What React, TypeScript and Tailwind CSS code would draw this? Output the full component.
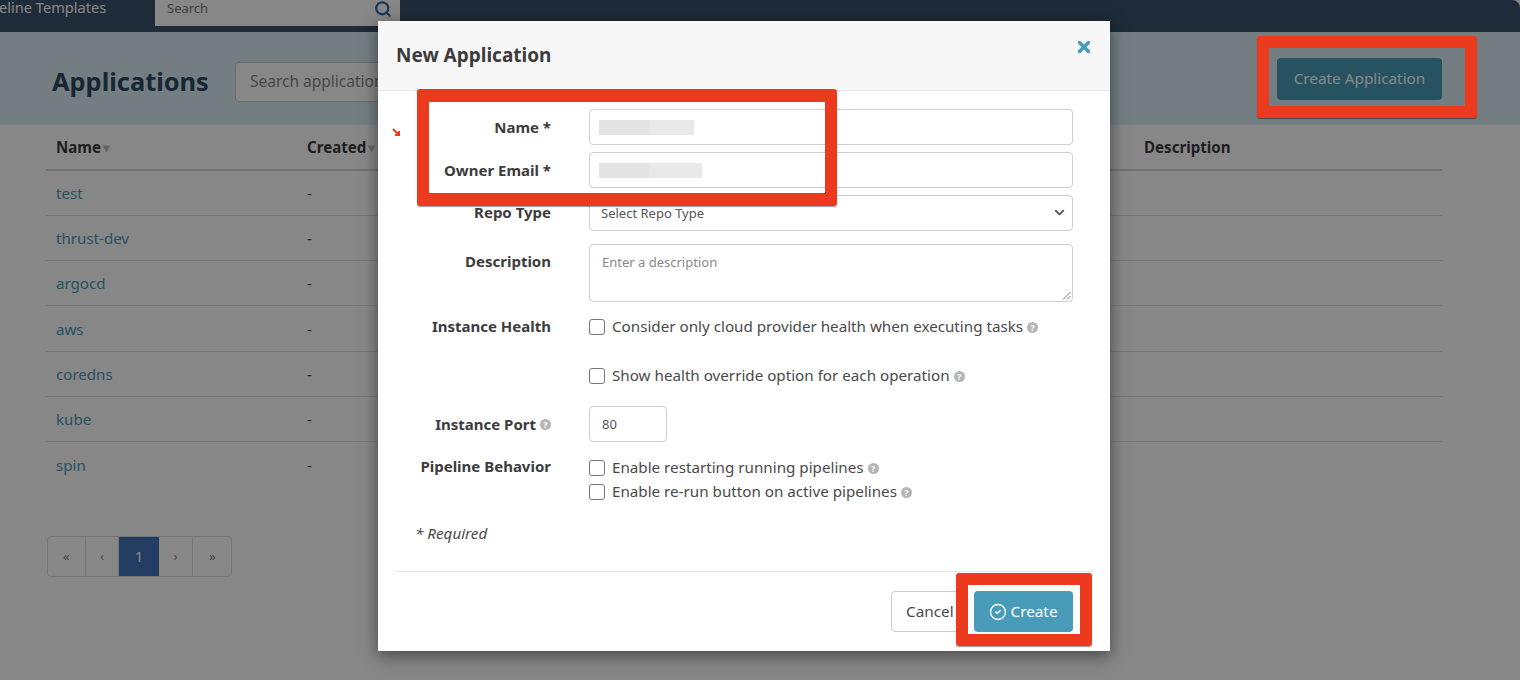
import { ChevronDown, CircleCheck, Search, X } from "lucide-react";

const font = "font-['Noto_Sans',sans-serif]";

const apps = ["test", "thrust-dev", "argocd", "aws", "coredns", "kube", "spin"];
const pages = [
  { label: "«", width: "w-[38px]" },
  { label: "‹", width: "w-[34px]" },
  { label: "1", width: "w-[40px]" },
  { label: "›", width: "w-[35px]" },
  { label: "»", width: "w-[38px]" },
];

function HelpIcon() {
  return (
    <span className="ml-1 inline-flex h-[11px] w-[11px] shrink-0 items-center justify-center rounded-full bg-[#b5b5b5] text-[9px] font-bold leading-none text-white">
      ?
    </span>
  );
}

function SortArrow() {
  return (
    <svg className="ml-px inline-block" width="9" height="8" viewBox="0 0 9 8">
      <path d="M0.5 0.5 H8.5 L4.5 7.5 Z" fill="#bdbdbd" />
    </svg>
  );
}

function Field({ label, help, children, className }: { label?: string; help?: boolean; children: React.ReactNode; className?: string }) {
  return (
    <div className={`flex ${className ?? ""}`}>
      <div className="flex w-[173px] shrink-0 items-center justify-end self-start text-[15px] font-bold text-[#3c3c3c]">
        {label}
        {help && <HelpIcon />}
      </div>
      <div className="ml-[38px] w-[484px]">{children}</div>
    </div>
  );
}

function CheckRow({ label }: { label: string }) {
  return (
    <label className="flex h-[24px] items-center text-[15.2px] text-[#4a4a4a]">
      <span className="mr-[7px] h-4 w-4 shrink-0 rounded-[3px] border border-[#767676] bg-white" />
      <span className="mb-[2px]">{label}</span>
      <HelpIcon />
    </label>
  );
}

function TextBox({ first, second }: { first: number; second: number }) {
  return (
    <div className="flex h-[36px] items-center rounded border border-[#cfcfcf] bg-white pl-[9px]">
      <div className="h-[15px] bg-[#e4e4e4]" style={{ width: first }} />
      <div className="h-[15px] bg-[#e9e9e9]" style={{ width: second }} />
    </div>
  );
}

export default function App() {
  return (
    <div className={`relative h-[680px] w-[1520px] overflow-hidden bg-white ${font}`}>
      <nav className="flex h-[32px] items-start rounded-tr-lg bg-[#39516a] text-[14.6px] text-white">
        <span className="ml-[-1px] w-[156px] whitespace-nowrap leading-[15px]">eline Templates</span>
        <div className="flex h-[26px] w-[245px] items-center justify-between bg-white pb-[9px] pl-3 pr-2 text-[13px] text-[#777]">
          Search
          <Search className="h-[18px] w-[18px] text-[#2f6fb0]" strokeWidth={3} />
        </div>
      </nav>

      <header className="flex h-[93px] items-center justify-between bg-[#dbeef5] pl-[52px] pr-[78px]">
        <div className="flex items-center pt-[7px]">
          <h1 className="mb-[2px] w-[183px] text-[25.4px] font-bold text-[#2d4a63]">Applications</h1>
          <div className="flex h-[40px] w-[300px] items-center rounded border border-[#ccc] bg-white pl-[14px] text-[15.5px] text-[#888]">
            Search applications
          </div>
        </div>
        <button className="h-[42px] w-[165px] rounded bg-[#489bb9] text-[15.3px] text-white">Create Application</button>
      </header>

      <main className="px-[46px]">
        <table className="w-[1396px] table-fixed border-collapse text-left text-[15.1px]">
          <thead>
            <tr className="h-[45px] border-b-2 border-[#d5d5d5] text-[#3c3c3c]">
              <th className="w-[251px] pl-[10px] pt-px font-bold">Name<SortArrow /></th>
              <th className="w-[837px] pl-[10px] pt-px font-bold">Created<SortArrow /></th>
              <th className="pl-[10px] pt-px font-bold">Description</th>
            </tr>
          </thead>
          <tbody>
            {apps.map((name, i) => (
              <tr key={name} className={`h-[45.3px] ${i < apps.length - 1 ? "border-b border-[#ddd]" : ""}`}>
                <td className="pl-[10px] pt-px text-[#489bb9]">{name}</td>
                <td className="pl-[10px] pt-px text-[#333]">-</td>
                <td />
              </tr>
            ))}
          </tbody>
        </table>

        <div className="ml-px mt-[49px] flex h-[41px] w-[185px] overflow-hidden rounded border border-[#ddd] text-[13px] text-[#888]">
          {pages.map((p) => (
            <span
              key={p.label}
              className={
                p.label === "1"
                  ? `flex ${p.width} items-center justify-center bg-[#4276b9] text-[15px] text-white`
                  : `flex ${p.width} items-center justify-center border-r border-[#ddd] last:border-r-0`
              }
            >
              {p.label}
            </span>
          ))}
        </div>
      </main>

      {/* dim layer */}
      <div className="absolute inset-0 bg-black/[.47]" />

      {/* modal */}
      <div className="absolute left-[378px] top-[21px] h-[630px] w-[732px] bg-white shadow-[0_4px_16px_rgba(0,0,0,0.5)]">
        <div className="flex h-[70px] items-center justify-between border-b border-[#e8e8e8] bg-[#f7f7f7] pl-[18px] pr-[17px]">
          <h2 className="text-[19px] font-bold text-[#3c3c3c]">New Application</h2>
          <X className="mb-[18px] h-[18px] w-[18px] text-[#489bb9]" strokeWidth={4.5} />
        </div>

        <div className="pt-[18px]">
          <Field label="Name *" className="leading-[36px]">
            <TextBox first={51} second={44} />
          </Field>
          <Field label="Owner Email *" className="mt-[7px] leading-[36px]">
            <TextBox first={50} second={53} />
          </Field>
          <Field label="Repo Type" className="mt-[7px] leading-[34px]">
            <div className="flex h-[36px] items-center justify-between rounded border border-[#cfcfcf] bg-white pb-px pl-[11px] pr-[5px] text-[13px] text-[#555]">
              Select Repo Type
              <ChevronDown className="h-[15px] w-[15px] text-[#555]" strokeWidth={3} />
            </div>
          </Field>
          <Field label="Description" className="mt-[13px] leading-[34px]">
            <div className="relative h-[58px] rounded border border-[#cfcfcf] bg-white px-3 py-[7px] text-[13px] leading-5 text-[#888]">
              Enter a description
              <svg className="absolute bottom-px right-px" width="9" height="9" viewBox="0 0 9 9">
                <path d="M8.5 1 L1 8.5 M8.5 5 L5 8.5" stroke="#777" strokeWidth="1" fill="none" />
              </svg>
            </div>
          </Field>
          <Field label="Instance Health" className="mt-[13px] leading-[22px]">
            <CheckRow label="Consider only cloud provider health when executing tasks" />
            <div className="mt-[25px]">
              <CheckRow label="Show health override option for each operation" />
            </div>
          </Field>
          <Field label="Instance Port" help className="mt-[18px] leading-[36px]">
            <div className="flex h-[36px] w-[78px] items-center rounded border border-[#cfcfcf] bg-white pl-3 text-[13px] text-[#555]">80</div>
          </Field>
          <Field label="Pipeline Behavior" className="mt-[14px] leading-[21px]">
            <CheckRow label="Enable restarting running pipelines" />
            <CheckRow label="Enable re-run button on active pipelines" />
          </Field>
          <p className="ml-[37px] mt-[18px] text-[15.2px] italic text-[#4a4a4a]">* Required</p>
        </div>

        <div className="absolute bottom-[79px] left-[18px] right-[18px] border-t border-[#e5e5e5]" />
        <div className="absolute bottom-[19px] right-[37px] flex">
          <button className="h-[41px] w-[77px] rounded border border-[#ccc] bg-white pl-[14px] text-left text-[15.3px] text-[#4a4a4a]">Cancel</button>
          <button className="ml-[6px] flex h-[41px] w-[99px] items-center justify-center rounded bg-[#489bb9] text-[15.3px] text-white">
            <CircleCheck className="mr-[3px] h-[18px] w-[18px]" strokeWidth={1.75} />
            Create
          </button>
        </div>
      </div>

      {/* red annotation boxes */}
      <div className="absolute left-[417px] top-[89px] h-[117px] w-[420px] rounded-[3px] border-[13px] border-x-[12px] border-[#ec3a1e] shadow-[0_1px_1px_rgba(0,0,0,0.4)]" />
      <div className="absolute left-[1257px] top-[36px] h-[82px] w-[220px] rounded-[3px] border-[12px] border-[#ec3a1e] shadow-[0_1px_1px_rgba(0,0,0,0.4)]" />
      <div className="absolute left-[956px] top-[573px] h-[73px] w-[136px] rounded-[3px] border-[12px] border-[#ec3a1e] shadow-[0_1px_1px_rgba(0,0,0,0.4)]" />
      <svg className="absolute left-[392px] top-[128px]" width="9" height="9" viewBox="0 0 9 9">
        <path d="M1 1 L7 7 M7 3 V7 H3" stroke="#ec3a1e" strokeWidth="2" fill="none" />
      </svg>
    </div>
  );
}
